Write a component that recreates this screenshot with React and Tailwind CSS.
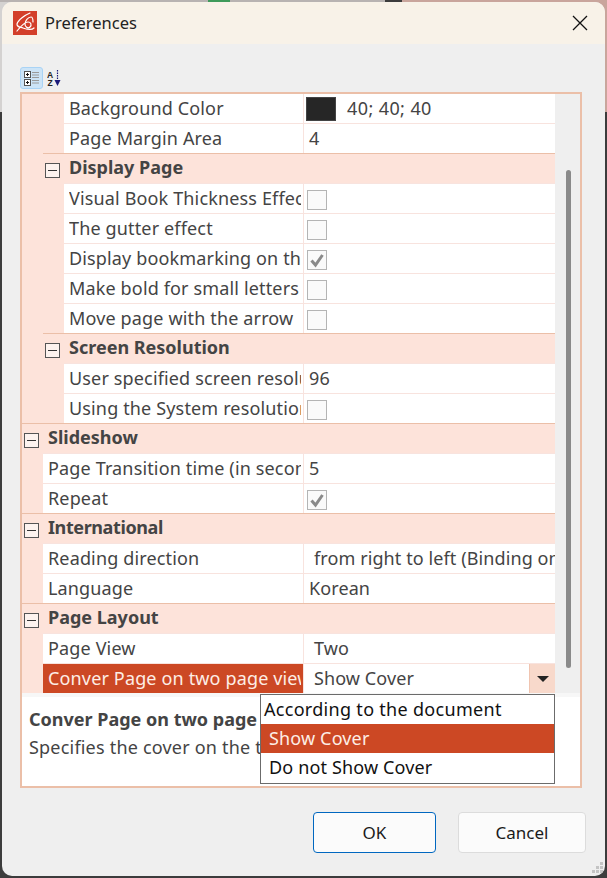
const FONT = "font-['Noto_Sans','Open_Sans',sans-serif]";

function Toggle() {
  return (
    <span className="mt-[4px] flex h-[15px] w-[15px] shrink-0 items-center justify-center border border-[#555] bg-[#fdf3ef]">
      <span className="h-px w-[9px] bg-[#333]" />
    </span>
  );
}

function Checkbox({ checked }) {
  return (
    <span className="flex h-5 w-5 items-center justify-center border border-[#b4b4b4] bg-[#fafafa]">
      {checked && (
        <svg width="16" height="16" viewBox="0 0 16 16">
          <path d="M2.5 8.5 L6.5 13 L13.5 3" fill="none" stroke="#8a8a8a" strokeWidth="3" />
        </svg>
      )}
    </span>
  );
}

function Category({ label, level, tracking = '' }) {
  return (
    <div className="flex h-[30px] bg-[#fde3da]">
      {level === 2 && <div className="w-[21px] shrink-0" />}
      <div className="flex flex-1 items-center border-t border-[#ebbfa8] pl-[2px]">
        <Toggle />
        <span className={`-mt-[2px] pl-[9px] text-[18px] font-bold text-[#444] ${tracking}`}>{label}</span>
      </div>
    </div>
  );
}

function Row({ label, level, value, checkbox, checked, swatch, pad, selected, first }) {
  return (
    <div className={`flex bg-[#fde3da] ${first ? 'h-[29px]' : 'h-[30px]'}`}>
      <div className={level === 2 ? 'w-[42px] shrink-0' : 'w-[21px] shrink-0'} />
      <div className={`flex min-w-0 flex-1 border-[#f8e3de] ${first ? '' : 'border-t'}`}>
        <div
          className={`flex shrink-0 items-center overflow-hidden whitespace-nowrap pl-[5px] text-[18px] tracking-[0.15px] ${
            selected ? 'bg-[#cc4824] text-[#fdeee6]' : 'bg-white text-[#444]'
          } ${level === 2 ? 'w-[239px]' : 'w-[260px]'}`}
        >
          <span className={level === 2 ? 'block w-[232px] overflow-hidden' : 'block w-[253px] overflow-hidden'}>{label}</span>
        </div>
        <div className="flex min-w-0 flex-1 items-center overflow-hidden whitespace-nowrap border-l border-[#f8e3de] bg-white text-[18px] tracking-[0.1px] text-[#444]">
          {swatch && (
            <>
              <span className="ml-[2px] h-6 w-[30px] border border-[#444] bg-[#262626]" />
              <span className="ml-[11px] tracking-[0.4px]">{value}</span>
            </>
          )}
          {checkbox && (
            <span className="ml-[3px] mt-[3px]">
              <Checkbox checked={checked} />
            </span>
          )}
          {!swatch && !checkbox && value && (
            <span className={pad ? 'pl-[10px]' : 'pl-[5px]'}>{value}</span>
          )}
          {selected && (
            <span className="ml-auto flex h-full w-[26px] items-center justify-center border-l border-[#f0c4b0] bg-[#f8d9cb]">
              <span className="h-0 w-0 border-x-[6px] border-t-[6px] border-x-transparent border-t-[#222]" />
            </span>
          )}
        </div>
      </div>
    </div>
  );
}

function Logo() {
  return (
    <svg width="24" height="24" viewBox="0 0 24 24">
      <rect width="24" height="24" fill="#d33f2a" />
      <path
        d="M17 2 C12 4 5 9 4 13 C3.5 16 7 16 10 17 C13 18 18 20 21 17 M4 20 C8 15 12 11 15 11 C18 11 19 14 17 16 C15 18 12 16 12 13 C12 10 15 6 18 6 C20 6 20 8 20 11"
        fill="none"
        stroke="#fff"
        strokeWidth="1.2"
        strokeLinecap="round"
      />
    </svg>
  );
}

function CategorizedIcon() {
  return (
    <svg width="16" height="16" viewBox="0 0 16 16">
      <rect x="0.5" y="1.5" width="6" height="6" fill="#fff" stroke="#555" />
      <rect x="0.5" y="9.5" width="6" height="6" fill="#fff" stroke="#555" />
      <path d="M2 4.5 H5 M3.5 3 V6 M2 12.5 H5 M3.5 11 V14" stroke="#111" />
      <path d="M8 2.5 H15 M8 5 H15 M8 7.5 H15 M8 10.5 H15 M8 13 H15" stroke="#9a9a9a" />
    </svg>
  );
}

function SortIcon() {
  return (
    <svg width="15" height="17" viewBox="0 0 15 17">
      <text x="0" y="8" fontSize="8.5" fontWeight="700" fontFamily="Liberation Sans" fill="#222">A</text>
      <text x="0.5" y="16" fontSize="8.5" fontWeight="700" fontFamily="Liberation Sans" fill="#222">Z</text>
      <path d="M10.5 0 V11" stroke="#1a1a7a" strokeWidth="1.2" strokeDasharray="1.5 1" />
      <path d="M7.5 10 H13.5 L10.5 16 Z" fill="#1a1a7a" />
    </svg>
  );
}

function Grip() {
  const cells = ['col-start-3', 'col-start-2', 'col-start-3', 'col-start-1', 'col-start-2', 'col-start-3'];
  return (
    <div className="absolute bottom-[3px] right-[2px] grid grid-cols-3 gap-px">
      {cells.map((c, i) => (
        <span key={i} className={`h-[3px] w-[3px] bg-[#c4c4c4] ${c}`} />
      ))}
    </div>
  );
}

export default function App() {
  return (
    <div className={`flex h-[878px] w-[607px] flex-col overflow-hidden px-[2px] pb-[2px] [background:linear-gradient(to_bottom,transparent_112px,#3c3c3c_112px),linear-gradient(to_right,#d4d2d1_50%,#c9a59c_50%)] ${FONT}`}>
      {/* bit of the desktop showing behind the dialog */}
      <div className="-mx-[2px] flex h-[2px] shrink-0">
        <div className="w-[208px] bg-[#b8b3b2]" />
        <div className="w-[22px] bg-[#3f9a5a]" />
        <div className="w-[155px] bg-[#b8b3b2]" />
        <div className="w-[17px] bg-[#3c3c3c]" />
        <div className="flex-1 bg-[#c9a59c]" />
      </div>
      <div className="relative flex flex-1 flex-col overflow-hidden rounded-[10px] bg-[#efefef]">
        {/* title bar */}
        <div className="flex h-[42px] shrink-0 items-center bg-[#f8f2e8] pl-[11px] pr-[17px]">
          <Logo />
          <span className="ml-[8px] text-[16.5px] text-[#222]">Preferences</span>
          <svg className="ml-auto" width="16" height="16" viewBox="0 0 16 16">
            <path d="M1 1 L15 15 M15 1 L1 15" stroke="#111" strokeWidth="1.3" />
          </svg>
        </div>

        {/* toolbar */}
        <div className="flex h-[48px] shrink-0 items-end gap-[3px] pb-[3px] pl-[18px]">
          <span className="flex h-[22px] w-[23px] items-center justify-center rounded-[3px] border border-[#a9d3f5] bg-[#cce4f7]">
            <CategorizedIcon />
          </span>
          <span className="flex h-[22px] w-[16px] items-center justify-center">
            <SortIcon />
          </span>
        </div>

        {/* property grid */}
        <div className="ml-[18px] mr-[23px] flex h-[696px] shrink-0 flex-col border-2 border-[#ebbfa8]">
          <div className="flex h-[599px] shrink-0">
            <div className="w-[533px] shrink-0">
              <Row first level={2} label="Background Color" swatch value="40; 40; 40" />
              <Row level={2} label="Page Margin Area" value="4" />
              <Category level={2} label="Display Page" />
              <Row level={2} label="Visual Book Thickness Effect" checkbox />
              <Row level={2} label="The gutter effect" checkbox />
              <Row level={2} label="Display bookmarking on the page" checkbox checked />
              <Row level={2} label="Make bold for small letters" checkbox />
              <Row level={2} label="Move page with the arrow" checkbox />
              <Category level={2} label="Screen Resolution" />
              <Row level={2} label="User specified screen resolution" value="96" />
              <Row level={2} label="Using the System resolution" checkbox />
              <Category level={1} label="Slideshow" />
              <Row level={1} label="Page Transition time (in seconds)" value="5" />
              <Row level={1} label="Repeat" checkbox checked />
              <Category level={1} label="International" tracking="tracking-[-0.4px]" />
              <Row level={1} label="Reading direction" value="from right to left (Binding on right)" pad />
              <Row level={1} label="Language" value="Korean" />
              <Category level={1} label="Page Layout" />
              <Row level={1} label="Page View" value="Two" pad />
              <Row level={1} label="Conver Page on two page view" value="Show Cover" pad selected />
            </div>
            {/* scrollbar */}
            <div className="flex-1 pl-[11px] pt-[76px]">
              <div className="h-[498px] w-[5px] rounded-full bg-[#8a8a8a]" />
            </div>
          </div>
          <div className="h-[4px] shrink-0 bg-[#f7f7f7]" />
          <div className="flex-1 overflow-hidden whitespace-nowrap bg-white pl-[7px] pt-[8px] text-[18px] leading-[28px] tracking-[0.2px] text-[#444]">
            <div className="font-bold tracking-normal">Conver Page on two page view</div>
            <div>Specifies the cover on the two page view</div>
          </div>
        </div>

        {/* buttons */}
        <div className="mt-[24px] flex justify-end gap-[22px] pr-[19px]">
          <button className="h-[41px] w-[123px] rounded-[4px] border border-[#0067c0] bg-[#fbfbfb] text-[17px] text-[#1a1a1a]">OK</button>
          <button className="h-[41px] w-[128px] rounded-[4px] border border-[#dcdcdc] bg-[#fbfbfb] text-[17px] text-[#1a1a1a]">Cancel</button>
        </div>
        <Grip />

        {/* open dropdown */}
        <div className="absolute left-[258px] top-[692px] h-[90px] w-[295px] border border-[#6b6b6b] bg-white text-[18px] tracking-[0.15px] text-[#111]">
          <div className="flex h-[29px] items-center pl-[3px] tracking-[0.3px]">According to the document</div>
          <div className="flex h-[29px] items-center bg-[#cc4824] pl-[8px] text-[#fdeee6]">Show Cover</div>
          <div className="flex h-[29px] items-center pl-[8px]">Do not Show Cover</div>
        </div>
      </div>
    </div>
  );
}
